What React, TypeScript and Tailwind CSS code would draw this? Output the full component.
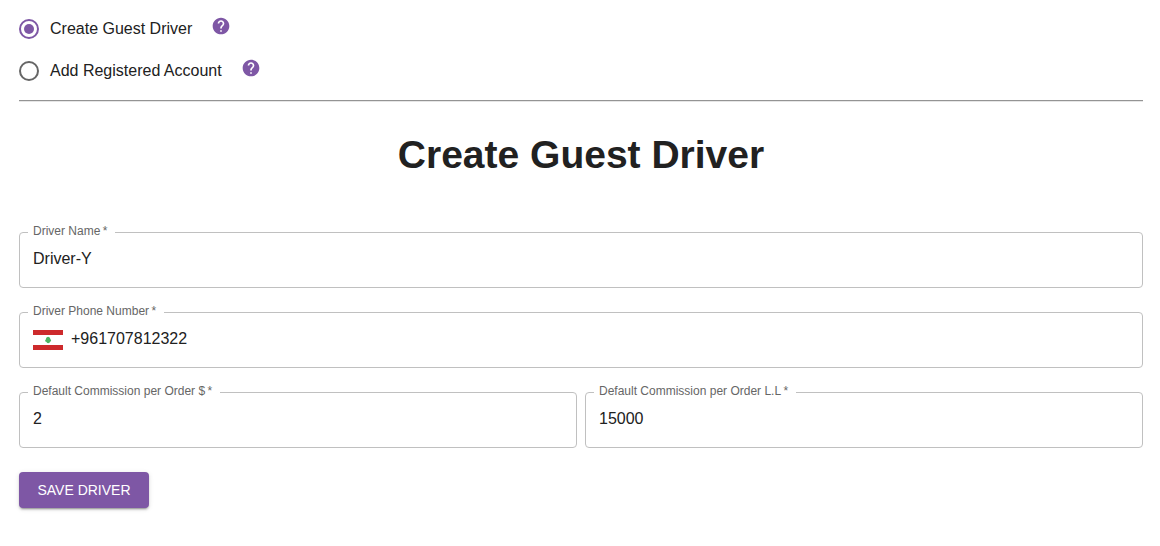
import { useState } from "react";
import type { ReactNode } from "react";
import { MdHelp } from "react-icons/md";

type Mode = "guest" | "registered";

type ModeOptionProps = {
  value: Mode;
  label: string;
  selected: Mode;
  onSelect: (mode: Mode) => void;
};

function ModeOption({ value, label, selected, onSelect }: ModeOptionProps) {
  return (
    <div className="flex h-[42px] items-center gap-[19px]">
      <label className="flex cursor-pointer items-center gap-[11px]">
        <input
          type="radio"
          name="mode"
          value={value}
          checked={selected === value}
          onChange={() => onSelect(value)}
          className="size-5 appearance-none rounded-full border-2 border-[#666666] bg-white bg-clip-content p-[3px] checked:border-[#7e57a5] checked:bg-[#7e57a5]"
        />
        <span className="text-base">{label}</span>
      </label>
      <button type="button" aria-label={`About: ${label}`} className="pb-1.5 text-[#7e57a5]">
        <MdHelp size={20} />
      </button>
    </div>
  );
}

type FieldProps = {
  id: string;
  label: string;
  type?: string;
  defaultValue: string;
  adornment?: ReactNode;
};

function Field({ id, label, type = "text", defaultValue, adornment }: FieldProps) {
  return (
    <div className="relative flex h-14 w-full min-w-0 items-center gap-2 rounded border border-[#c0c0c0] px-[13px] focus-within:border-[#7e57a5]">
      <label
        htmlFor={id}
        className="absolute -top-2.5 left-2 bg-white pr-2 pl-[5px] text-xs text-[#666666]"
      >
        {label}&thinsp;*
      </label>
      {adornment}
      <input
        id={id}
        type={type}
        defaultValue={defaultValue}
        required
        className="mb-0.5 min-w-0 flex-1 bg-transparent text-base outline-none"
      />
    </div>
  );
}

function LebanonFlag() {
  return (
    <svg width="30" height="20" viewBox="0 0 30 20" role="img" aria-label="Lebanon" className="shrink-0">
      <path fill="#fff" d="M0 0h30v20H0z" />
      <path fill="#cd2a2c" d="M0 0h30v5H0zM0 15h30v5H0z" />
      <path
        fill="#4bb463"
        d="M15.1 6.8l1.6.8.7 1.3.2.7.6 1-.6.9-.9.5v.8l-1.6.4-1.3-.4-.1-.8-1.3-.5-.3-.9.7-1 .1-.7.6-1.3z"
      />
    </svg>
  );
}

export default function App() {
  const [mode, setMode] = useState<Mode>("guest");

  return (
    <main className="bg-white pt-2 pr-[17px] pb-8 pl-[19px] font-['Liberation_Sans',Arial,sans-serif] text-[#212121]">
      <div role="radiogroup" aria-label="Driver type">
        <ModeOption value="guest" label="Create Guest Driver" selected={mode} onSelect={setMode} />
        <ModeOption value="registered" label="Add Registered Account" selected={mode} onSelect={setMode} />
      </div>
      <hr className="mt-2 border-t border-b border-t-[#949494] border-b-[#e6e6e6]" />
      <h1 className="mt-[31px] text-center text-[39px] leading-[44px] font-bold">Create Guest Driver</h1>
      <form className="mt-[55px] flex flex-col gap-6" onSubmit={(event) => event.preventDefault()}>
        <Field id="driver-name" label="Driver Name" defaultValue="Driver-Y" />
        <Field
          id="driver-phone"
          label="Driver Phone Number"
          type="tel"
          defaultValue="+961707812322"
          adornment={<LebanonFlag />}
        />
        <div className="flex gap-2">
          <Field id="commission-usd" label="Default Commission per Order $" defaultValue="2" />
          <Field id="commission-lbp" label="Default Commission per Order L.L" defaultValue="15000" />
        </div>
        <button
          type="submit"
          className="h-9 min-w-[130px] self-start rounded bg-[#7e57a5] px-4 text-sm text-white uppercase shadow-[0_3px_1px_-2px_rgba(0,0,0,0.2),0_2px_2px_0_rgba(0,0,0,0.14),0_1px_5px_0_rgba(0,0,0,0.12)]"
        >
          Save Driver
        </button>
      </form>
    </main>
  );
}
